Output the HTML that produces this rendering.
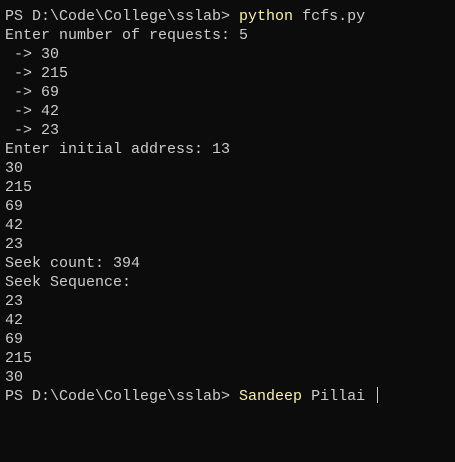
<!DOCTYPE html>
<html><head><style>
html,body{margin:0;padding:0;background:#0c0c0c;width:455px;height:462px;overflow:hidden}
pre{margin:0;position:absolute;left:5px;top:7px;font-family:"Liberation Mono",monospace;font-size:15px;line-height:19px;color:#cccccc;white-space:pre}
.y{color:#f9f1a5}
.c{display:inline-block;width:1px;height:16px;background:#ccc;vertical-align:-3px;margin-left:3px}
</style></head><body><pre>PS D:\Code\College\sslab&gt; <span class="y">python</span> fcfs.py
Enter number of requests: 5
 -&gt; 30
 -&gt; 215
 -&gt; 69
 -&gt; 42
 -&gt; 23
Enter initial address: 13
30
215
69
42
23
Seek count: 394
Seek Sequence:
23
42
69
215
30
PS D:\Code\College\sslab&gt; <span class="y">Sandeep</span> Pillai <span class="c"></span></pre></body></html>
